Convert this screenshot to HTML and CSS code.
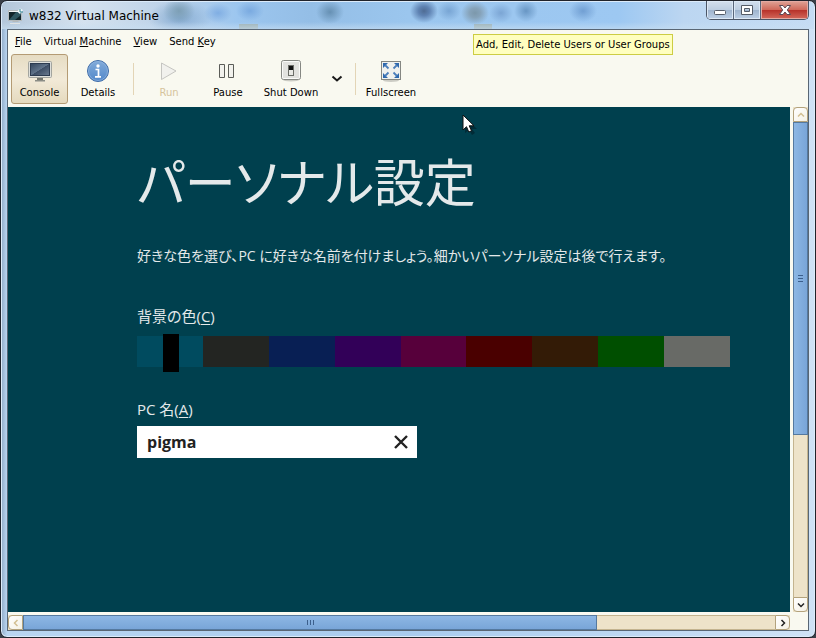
FILE: index.html
```html
<!DOCTYPE html>
<html lang="ja">
<head>
<meta charset="utf-8">
<title>w832 Virtual Machine</title>
<link rel="stylesheet" href="styles.css">
</head>
<body>
<div class="window">
  <header class="titlebar">
    <svg class="app-icon" width="16" height="16" viewBox="0 0 16 16"><rect x=".5" y="2.500" width="13" height="10" fill="#f2f5f6" stroke="#b4babd"/><rect x="1" y="4" width="12" height="8" fill="#12242a"/><path d="M1 12 8 4h5v3L7 12z" fill="#2f5660"/><path d="M5 13h5l1 1H4z" fill="#b5babc"/><path d="M2 15.500h10" stroke="#dfe3e5"/><path d="M9 3.500 12 .5l3 1.500-3 4z" fill="#f4fbff"/><path d="M12 1v3h3" fill="none" stroke="#318492"/></svg>
    <h1 class="title">w832 Virtual Machine</h1>
    <div class="window-buttons">
      <button class="wb" aria-label="Minimize"><svg width="14" height="12" viewBox="0 0 14 12"><rect x="1.500" y="6.500" width="11" height="4" rx="1" fill="#fff" stroke="#555c68"/></svg></button>
      <button class="wb" aria-label="Maximize"><svg width="14" height="12" viewBox="0 0 14 12"><path d="M1.500 1.500h11v9h-11zM4.500 4.500v3h5v-3z" fill="#fff" fill-rule="evenodd" stroke="#555c68"/></svg></button>
      <button class="wb close" aria-label="Close"><svg width="14" height="12" viewBox="0 0 14 12"><path d="M1.500 1.500h3.500l2 2.500 2-2.500h3.500L9.300 6l3.200 4.500H9L7 8l-2 2.500H1.500L4.700 6z" fill="#fff" stroke="#5b4a54"/></svg></button>
    </div>
  </header>
  <main class="client">
    <nav class="menubar">
      <button><u>F</u>ile</button>
      <button>Virtual <u>M</u>achine</button>
      <button><u>V</u>iew</button>
      <button>Send <u>K</u>ey</button>
    </nav>
    <div class="toolbar">
      <button class="tool active">
        <svg width="24" height="24" viewBox="0 0 24 24"><defs><linearGradient id="scr" x1="0" y1="0" x2="1" y2="1"><stop offset="0" stop-color="#33455c"/><stop offset=".5" stop-color="#61748b"/><stop offset=".52" stop-color="#3c4d65"/><stop offset="1" stop-color="#6c7c90"/></linearGradient></defs><rect x=".5" y="2.500" width="23" height="16" rx="1" fill="#dedfdb" stroke="#a3a59f"/><rect x="2.500" y="4.500" width="19" height="12" fill="url(#scr)" stroke="#2c3b50"/><path d="M9 19h6v2H9z" fill="#74766f"/><path d="M7 21h10v1.500H7z" fill="#8b8d86"/></svg>
        <span>Console</span></button>
      <button class="tool">
        <svg width="24" height="24" viewBox="0 0 24 24"><defs><linearGradient id="inf" x1="0" y1="0" x2="0" y2="1"><stop offset="0" stop-color="#82abd9"/><stop offset="1" stop-color="#5288ca"/></linearGradient></defs><circle cx="12" cy="12" r="10.500" fill="url(#inf)" stroke="#3f6ca7"/><circle cx="12" cy="12" r="9.500" fill="none" stroke="#90b5df" stroke-width=".7"/><circle cx="12" cy="7" r="1.700" fill="#fff"/><path d="M9.500 10.500h3v7M9 17.800h6" fill="none" stroke="#fff" stroke-width="1.700"/></svg>
        <span>Details</span></button>
      <span class="separator"></span>
      <button class="tool" disabled>
        <svg width="24" height="24" viewBox="0 0 24 24"><path d="M4.500 4 19 12 4.500 20.500z" fill="#f1f1ed" stroke="#c5c5c1"/></svg>
        <span>Run</span></button>
      <button class="tool">
        <svg width="24" height="24" viewBox="0 0 24 24"><path d="M3.500 5.500h5v13h-5zM12.500 5.500h5v13h-5z" fill="#f2f2ed" stroke="#5b5d58"/></svg>
        <span>Pause</span></button>
      <button class="tool wide">
        <svg width="24" height="24" viewBox="0 0 24 24"><ellipse cx="12" cy="21" rx="8" ry="1.500" fill="#ccccc4"/><rect x="2.500" y="1.500" width="19" height="19" rx="2" fill="#e2e2df" stroke="#858782"/><rect x="3.500" y="2.500" width="17" height="17" rx="1" fill="none" stroke="#fafaf8"/><rect x="9" y="6" width="6" height="11" fill="#6b6d68"/><rect x="10" y="7" width="4" height="4" fill="#111"/><rect x="10" y="11" width="4" height="5" fill="#e9e9e5"/></svg>
        <span>Shut Down</span></button>
      <button class="drop" aria-label="Shut down options"><svg width="12" height="8" viewBox="0 0 12 8"><path d="M1.500 1.500 6 5.500 10.500 1.500" fill="none" stroke="#1a1a1a" stroke-width="2"/></svg></button>
      <span class="separator"></span>
      <button class="tool">
        <svg width="24" height="24" viewBox="0 0 24 24"><ellipse cx="12" cy="21.500" rx="8" ry="1.500" fill="#ccccc4"/><rect x="2.500" y="2.500" width="19" height="18" fill="#f0f1ee" stroke="#858782"/><path d="M4 4h5L4 9zM20 4h-5l5 5zM4 19h5l-5-5zM20 19h-5l5-5z" fill="#2e68ad"/><path d="m6 6 3.500 3.500M18 6l-3.500 3.500M6 17l3.500-3.500M18 17l-3.500-3.500" stroke="#4c7fbb" stroke-width="1.800"/></svg>
        <span>Fullscreen</span></button>
    </div>
    <div class="viewer">
      <section class="guest">
        <h2>パーソナル設定</h2>
        <p>好きな色を選び、PC に好きな名前を付けましょう。細かいパーソナル設定は後で行えます。</p>
        <label for="color">背景の色(<u>C</u>)</label>
        <div class="palette">
          <i class="c1"></i><i class="c2"></i><i class="c3"></i><i class="c4"></i><i class="c5"></i><i class="c6"></i><i class="c7"></i><i class="c8"></i><i class="c9"></i>
          <input id="color" type="range" min="0" max="8" value="0">
        </div>
        <label for="pc">PC 名(<u>A</u>)</label>
        <div class="field">
          <input id="pc" type="text" value="pigma">
          <button aria-label="Clear"><svg width="16" height="16" viewBox="0 0 16 16"><path d="M2 2l12 12M14 2 2 14" stroke="#222" stroke-width="2.400"/></svg></button>
        </div>
      </section>
      <div class="scroll vertical">
        <button class="up" aria-label="Scroll up"><svg width="8" height="8" viewBox="0 0 8 8"><path d="M1 5.500 4 2.500l3 3" fill="none" stroke="#d3bf92" stroke-width="1.500"/></svg></button>
        <div class="thumb"><svg width="5" height="7" viewBox="0 0 5 7"><path d="M0 .5h5M0 3.500h5M0 6.500h5" stroke="#3c5f8c"/></svg></div>
        <div class="rest"></div>
        <button class="down" aria-label="Scroll down"><svg width="8" height="8" viewBox="0 0 8 8"><path d="M1 2.500l3 3 3-3" fill="none" stroke="#222" stroke-width="1.500"/></svg></button>
      </div>
      <div class="scroll horizontal">
        <button class="left" aria-label="Scroll left"><svg width="8" height="8" viewBox="0 0 8 8"><path d="M5.500 1l-3 3 3 3" fill="none" stroke="#d3bf92" stroke-width="1.500"/></svg></button>
        <div class="thumb"><svg width="7" height="5" viewBox="0 0 7 5"><path d="M.5 0v5M3.500 0v5M6.500 0v5" stroke="#3c5f8c"/></svg></div>
        <div class="rest"></div>
        <button class="right" aria-label="Scroll right"><svg width="8" height="8" viewBox="0 0 8 8"><path d="M2.500 1l3 3-3 3" fill="none" stroke="#222" stroke-width="1.500"/></svg></button>
      </div>
    </div>
  </main>
  <div class="tooltip" role="tooltip">Add, Edit, Delete Users or User Groups</div>
  <svg class="cursor" width="16" height="22" viewBox="0 0 16 22"><path d="M3 3v16l4-3 3 5 3-2-3-4h5z" fill="#012b37"/><path d="M1 1v15l3.500-3.300 2.300 5.300 2.700-1.200-2.300-5H12z" fill="#fff" stroke="#111"/></svg>
</div>
</body>
</html>
```

FILE: styles.css
```css
* { box-sizing: border-box; }
html { background: #3a3f48; }
body { margin: 0; font-family: "DejaVu Sans", sans-serif; font-size: 10px; color: #000; }
button { margin: 0; padding: 0; border: 0; background: none; font: inherit; color: inherit; }
svg { display: block; flex: none; }

.window {
  position: relative;
  display: flex;
  flex-direction: column;
  min-height: 100vh;
  padding: 0 6px 6px;
  border: 1px solid #20232b;
  border-radius: 7px;
  background: linear-gradient(90deg, #8fa9c4, #b9d5f1 6px, #a9cbee 50%, #cfe2f6);
  box-shadow: inset 0 0 0 1px #dcebfa;
}
.titlebar {
  display: flex;
  align-items: center;
  gap: 5px;
  height: 27px;
  margin: 1px -5px 0;
  padding-left: 6px;
  border-radius: 5px 5px 0 0;
  background:
    linear-gradient(transparent 20px, #c9dff299),
    radial-gradient(ellipse 14px 12px at 422px 9px, #4f6c94, #5f83b3 40%, transparent),
    radial-gradient(ellipse 14px 12px at 328px 10px, #6690b3, transparent),
    radial-gradient(ellipse 12px 10px at 447px 9px, #78a5d4, transparent),
    radial-gradient(ellipse 14px 12px at 473px 11px, #7c98ab, #86a3ba 40%, transparent),
    radial-gradient(ellipse 12px 10px at 499px 11px, #7ba5d4, transparent),
    radial-gradient(ellipse 12px 11px at 524px 9px, #6896c4, transparent),
    radial-gradient(ellipse 14px 11px at 581px 9px, #719fd3, transparent),
    radial-gradient(ellipse 16px 13px at 177px 9px, #7d9fb5, transparent),
    radial-gradient(ellipse 32px 18px at 178px 16px, #86acd2, transparent),
    radial-gradient(ellipse 14px 10px at 216px 11px, #80aee3, transparent),
    radial-gradient(ellipse 14px 10px at 248px 9px, #7aaae0, transparent),
    linear-gradient(#9db1b4, #9db1b4) 237px 22px / 19px 5px no-repeat,
    linear-gradient(#9db1b4, #9db1b4) 472px 22px / 18px 5px no-repeat,
    linear-gradient(90deg, #b3c6da, #d5e2ef 10%, #bdd2e8 20%, #9cc6ef 29%, #94bee6 38%, #9bc6ee 50%, #9dc8f2 76%, #bcd6f1 84%, #c5dcf4);
}
.title { margin: 0; font-size: 12px; font-weight: 400; }
.window-buttons {
  display: flex;
  align-self: flex-start;
  height: 19px;
  margin: -1px 5px 0 auto;
  border: 1px solid #4b5566;
  border-top: 0;
  border-radius: 0 0 5px 5px;
  overflow: hidden;
}
.wb {
  display: grid;
  place-items: center;
  width: 27px;
  border-right: 1px solid #59667a;
  background: linear-gradient(#d3dfed, #bccde1 50%, #9fb4ce 52%, #bdd0e6);
  box-shadow: inset 0 0 0 1px #dce8f5;
}
.wb.close {
  width: 47px;
  border-right: 0;
  background: linear-gradient(#dfa497, #cf6a5b 48%, #b7332b 52%, #d4695b);
  box-shadow: inset 0 0 0 1px #e3aaa2;
}

.client {
  display: flex;
  flex: 1;
  flex-direction: column;
  border: 1px solid #596674;
  background: #f9f9f0;
}
.menubar { display: flex; gap: 12px; height: 22px; padding-left: 7px; }
.toolbar { display: flex; align-items: center; gap: 1px; height: 55px; padding: 0 3px 2px; }
.tool {
  display: flex;
  flex-direction: column;
  align-items: center;
  gap: 4px;
  min-width: 58px;
  height: 50px;
  padding-top: 4px;
  border: 1px solid transparent;
  border-radius: 3px;
}
.tool.active { min-width: 57px; border-color: #b49b74; background: linear-gradient(#e6dcc3, #f2ead8 50%, #e5dabe); }
.tool:disabled { color: #d6c49c; }
.wide { min-width: 66px; }
.drop { display: grid; place-items: center; width: 24px; height: 50px; }
.separator { width: 1px; height: 32px; margin: 0 5px; background: #e3d5b6; }

.viewer {
  display: grid;
  flex: 1;
  grid-template-columns: 1fr 15px;
  grid-template-rows: 1fr 15px;
  gap: 3px;
}
.guest {
  padding: 43px 60px 40px 129px;
  background: #00404e;
  color: #e4e9ea;
  font-family: "Open Sans", "Noto Sans CJK JP", sans-serif;
  font-size: 15px;
  line-height: 24px;
  font-feature-settings: "palt";
}
.guest h2 { margin: 0 0 30px; font-size: 51px; line-height: 64px; font-weight: 400; white-space: nowrap; }
.guest p { margin: 0 0 36px; font-size: 14px; white-space: nowrap; }
.guest label { display: block; margin-bottom: 5px; }
.guest u { text-underline-offset: 2px; }
.palette { position: relative; display: grid; grid-template-columns: repeat(9, 1fr); height: 31px; margin: 8px 0 30px; }
.c1 { background: #004b5f; }
.c2 { background: #232522; }
.c3 { background: #081f54; }
.c4 { background: #320058; }
.c5 { background: #57003b; }
.c6 { background: #4a0000; }
.c7 { background: #331b06; }
.c8 { background: #004f00; }
.c9 { background: #686a66; }
.palette input {
  position: absolute;
  inset: -2px 26px auto;
  height: 38px;
  margin: 0;
  appearance: none;
  background: none;
}
.palette input::-webkit-slider-thumb { appearance: none; width: 16px; height: 38px; background: #000; }
.field { display: flex; align-items: center; width: 280px; height: 32px; padding: 0 8px 0 10px; background: #fff; }
.field input {
  flex: 1;
  min-width: 0;
  padding: 0;
  border: 0;
  outline: 0;
  background: none;
  color: #222;
  font: 700 16px "Open Sans", sans-serif;
}

.scroll { display: flex; background: #eee3c9; }
.vertical { flex-direction: column; }
.scroll button {
  display: grid;
  flex: none;
  place-items: center;
  width: 15px;
  height: 15px;
  border: 1px solid #b3a27c;
  background: linear-gradient(135deg, #fff, #f5f1e5);
}
.up { border-radius: 4px 4px 0 0; }
.down { border-radius: 0 0 4px 4px; }
.left { border-radius: 4px 0 0 4px; }
.right { border-radius: 0 4px 4px 0; }
.thumb { display: grid; flex: 312; place-items: center; border: 1px solid #55799f; background: linear-gradient(90deg, #8db7e4, #79a5d8); }
.rest { flex: 163; border: solid #c4b48f; border-width: 0 1px; }
.horizontal .thumb { flex: 574; background: linear-gradient(#8db7e4, #79a5d8); }
.horizontal .rest { flex: 178; border-width: 1px 0; }

.tooltip {
  position: absolute;
  top: 33px;
  left: 472px;
  padding: 3px 2px;
  border: 1px solid #cdcd43;
  background: #ffffbf;
  line-height: 13px;
  white-space: nowrap;
}
.cursor { position: absolute; top: 113px; left: 461px; }
```
